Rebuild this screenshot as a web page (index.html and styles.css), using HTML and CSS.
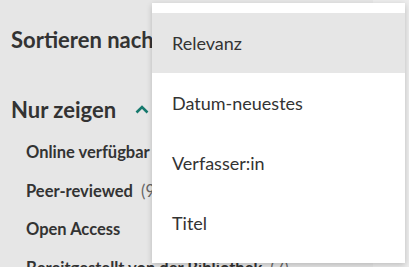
FILE: index.html
```html
<!DOCTYPE html>
<html lang="de">
<head>
    <meta charset="UTF-8">
    <title>Sortieren</title>
    <link rel="stylesheet" href="styles.css">
</head>
<body>
    <div class="page">
        <aside class="filters">
            <h2 class="filter-title">Sortieren nach</h2>
            <div class="filter-head">
                <h2 class="filter-title">Nur zeigen</h2>
                <svg class="chevron" width="14" height="10" viewBox="0 0 14 10">
                    <path d="M1.5 8.5 L7 3 L12.5 8.5" fill="none" stroke="#16796d" stroke-width="2.6"/>
                </svg>
            </div>
            <ul class="filter-list">
                <li>Online verfügbar <span class="count">(12)</span></li>
                <li>Peer-reviewed <span class="count">(9)</span></li>
                <li>Open Access</li>
                <li>Bereitgestellt von der Bibliothek <span class="count">(7)</span></li>
            </ul>
        </aside>
        <div class="behind"></div>
    </div>

    <ul class="sort-menu">
        <li class="sort-item active">Relevanz</li>
        <li class="sort-item">Datum-neuestes</li>
        <li class="sort-item">Verfasser:in</li>
        <li class="sort-item">Titel</li>
    </ul>
</body>
</html>
```

FILE: styles.css
```css
body {
    margin: 0;
    font-family: 'Lato', 'Open Sans', sans-serif;
    background-color: #e6e6e6;
    color: #333;
    height: 267px;
    overflow: hidden;
}
.page {
    display: flex;
    height: 267px;
}
.filters {
    flex-grow: 1;
    padding: 23px 0 0 11px;
}
.filter-title {
    margin: 0;
    font-size: 22px;
    font-weight: 700;
    line-height: 34px;
}
.filter-head {
    display: flex;
    align-items: center;
    margin-top: 36px;
}
.chevron {
    margin-left: 19px;
    margin-top: -3px;
}
.filter-list {
    list-style: none;
    margin: 6px 0 0;
    padding: 0 0 0 15px;
}
.filter-list li {
    font-size: 16.5px;
    font-weight: 700;
    line-height: 38.5px;
    white-space: nowrap;
}
.count {
    font-weight: 400;
    color: #666;
    margin-left: 4px;
}
.behind {
    width: 36px;
    background-color: #ececec;
}
.sort-menu {
    position: absolute;
    top: 3px;
    left: 152px;
    width: 253px;
    margin: 0;
    padding: 10px 0;
    list-style: none;
    background-color: #fff;
    box-shadow: 0 2px 6px rgba(0, 0, 0, 0.2);
}
.sort-item {
    height: 60px;
    line-height: 60px;
    padding-left: 20px;
    font-size: 18px;
    color: #333;
}
.sort-item.active {
    background-color: #e6e6e6;
}
```
